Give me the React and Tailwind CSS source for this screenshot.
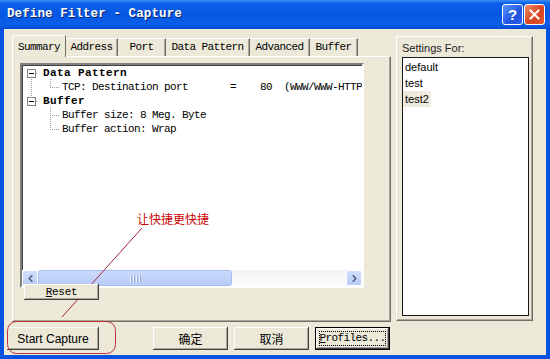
import { ChevronLeft, ChevronRight } from 'lucide-react'

const mono = "[font-family:'Liberation_Mono','DejaVu_Sans_Mono',monospace]"
const sans = "[font-family:'Liberation_Sans',Arial,sans-serif]"
const cjk = "[font-family:'Noto_Sans_CJK_SC',sans-serif]"
const raised = 'shadow-[inset_-1px_-1px_#404040,inset_1px_1px_#ffffff,inset_-2px_-2px_#aca899]'

const tabs = [
  { label: 'Summary', w: 'w-[54px]', active: true },
  { label: 'Address', w: 'w-[52px]' },
  { label: 'Port', w: 'w-[48px]' },
  { label: 'Data Pattern', w: 'w-[84px]' },
  { label: 'Advanced', w: 'w-[60px]' },
  { label: 'Buffer', w: 'w-[48px]' },
]

function Tab({ label, w, active }) {
  if (active) {
    return (
      <div className={`${w} h-[22px] -mb-px relative z-10 bg-[#ece9d8] border-l border-t border-white border-r border-r-[#716f64] rounded-tl-[2px] flex items-start justify-center pt-[3px] text-[11px] tracking-[-0.6px] text-black ${mono}`}>
        {label}
      </div>
    )
  }
  return (
    <div className={`${w} h-[18px] bg-[#ece9d8] border-t border-white border-r border-r-[#716f64] shadow-[inset_-1px_0_#aca899] flex items-center justify-center text-[11px] tracking-[-0.6px] text-black ${mono}`}>
      {label}
    </div>
  )
}

function MinusBox() {
  return (
    <div className="w-[9px] h-[9px] border border-[#848284] bg-white flex items-center justify-center">
      <div className="w-[5px] h-px bg-black" />
    </div>
  )
}

function TreeRow({ child, box, children }) {
  return (
    <div className={`h-[14px] flex items-center whitespace-pre text-[11px] text-black ${mono} ${child ? 'pl-[40px] tracking-[-0.6px]' : 'pl-[5px] font-bold tracking-[0.4px]'}`}>
      {box && <MinusBox />}
      {box && <div className="w-[7px]" />}
      <span>{children}</span>
    </div>
  )
}

function ScrollBtn({ children }) {
  return (
    <div className="w-[16px] h-[16px] rounded-[2px] border border-white bg-[linear-gradient(#d2dffc,#b8cbf6)] flex items-center justify-center text-[#4d6185]">
      {children}
    </div>
  )
}

function Button({ w, children, font, isDefault }) {
  if (isDefault) {
    return (
      <div className={`${w} h-[23px] border border-black bg-[#ece9d8] ${raised} p-[3px]`}>
        <div className={`w-full h-full border border-dotted border-black flex items-center justify-center text-[11px] text-black ${font}`}>
          {children}
        </div>
      </div>
    )
  }
  return (
    <div className={`${w} h-[23px] bg-[#ece9d8] ${raised} flex items-center justify-center text-black ${font}`}>
      {children}
    </div>
  )
}

export default function App() {
  return (
    <div className="relative w-[550px] h-[359px] overflow-hidden bg-[#0553e0] flex flex-col select-none">
      {/* Title bar */}
      <div className="h-[29px] shrink-0 flex items-center bg-[linear-gradient(#3d8cf7_0%,#0a5fe6_12%,#0557e3_50%,#0a5fe8_85%,#0548d4_100%)]">
        <span className={`ml-[7px] text-white font-bold text-[12.5px] tracking-[0.1px] [text-shadow:1px_1px_#0a246a] ${mono}`}>
          Define Filter - Capture
        </span>
        <div className="ml-auto mr-[5px] flex gap-px">
          <div className="w-[21px] h-[21px] rounded-[3px] border border-white bg-[linear-gradient(135deg,#5d95ff,#1f55e0_60%,#2a5fe8)] flex items-center justify-center text-white font-bold text-[15px] leading-none [font-family:'Liberation_Sans',Arial,sans-serif]">
            ?
          </div>
          <div className="w-[21px] h-[21px] rounded-[3px] border border-white bg-[linear-gradient(135deg,#f0906c,#d9431f_55%,#e05a30)] flex items-center justify-center">
            <svg width="11" height="11" viewBox="0 0 11 11">
              <path d="M1.5 1.5 L9.5 9.5 M9.5 1.5 L1.5 9.5" stroke="#fff" strokeWidth="2" strokeLinecap="square" />
            </svg>
          </div>
        </div>
      </div>

      {/* Client area */}
      <div className="flex-1 mx-[4px] mb-[4px] bg-[#ece9d8] flex flex-col">
        <div className="flex items-start pt-[6px]">
          {/* Tab control */}
          <div className="ml-[8px] w-[379px] flex flex-col">
            <div className="h-[21px] flex items-end">
              {tabs.map((t) => (
                <Tab key={t.label} {...t} />
              ))}
            </div>
            <div className="h-[266px] border-t border-l border-white border-r border-b border-r-[#716f64] border-b-[#716f64] shadow-[inset_-1px_-1px_#aca899] flex flex-col">
              <div className="ml-[7px] mt-[6px] w-[344px] h-[225px] bg-white border-2 border-t-[#808080] border-l-[#808080] border-r-white border-b-white shadow-[inset_1px_1px_#404040] flex flex-col">
                <div className="relative flex-1 overflow-hidden pt-px">
                  <svg className="absolute left-0 top-px" width="60" height="80">
                    <g stroke="#a0a0a0" strokeWidth="1" strokeDasharray="1 1" fill="none">
                      <path d="M9.5 13 V32" />
                      <path d="M28.5 13 V22 M28 21.5 H38" />
                      <path d="M28.5 41 V64 M28 49.5 H38 M28 63.5 H38" />
                      <path d="M14 7.5 H16 M14 35.5 H16" />
                    </g>
                  </svg>
                  <TreeRow box>Data Pattern</TreeRow>
                  <TreeRow child>TCP: Destination port       =    80  (WWW/WWW-HTTP</TreeRow>
                  <TreeRow box>Buffer</TreeRow>
                  <TreeRow child>Buffer size: 8 Meg. Byte</TreeRow>
                  <TreeRow child>Buffer action: Wrap</TreeRow>
                </div>
                {/* Horizontal scrollbar */}
                <div className="h-[16px] flex bg-[linear-gradient(#f3f4f6,#fdfdfd)]">
                  <ScrollBtn>
                    <ChevronLeft size={11} strokeWidth={3.5} />
                  </ScrollBtn>
                  <div className="w-[194px] h-[16px] rounded-[3px] border border-[#a6bdf2] bg-[linear-gradient(#cbdafc,#b8cbf7)] flex items-center justify-center gap-px">
                    <div className="w-px h-[7px] bg-[#eef3ff] shadow-[1px_0_#8fa8e0]" />
                    <div className="w-px h-[7px] bg-[#eef3ff] shadow-[1px_0_#8fa8e0] ml-px" />
                    <div className="w-px h-[7px] bg-[#eef3ff] shadow-[1px_0_#8fa8e0] ml-px" />
                    <div className="w-px h-[7px] bg-[#eef3ff] shadow-[1px_0_#8fa8e0] ml-px" />
                  </div>
                  <div className="flex-1" />
                  <ScrollBtn>
                    <ChevronRight size={11} strokeWidth={3.5} />
                  </ScrollBtn>
                </div>
              </div>
              <div className={`relative z-10 -mt-[4px] ml-[11px] w-[75px] h-[16px] bg-[#ece9d8] ${raised} flex items-center justify-center text-[11px] tracking-[-0.3px] text-black ${mono}`}>
                <span><span className="underline">R</span>eset</span>
              </div>
            </div>
          </div>

          {/* Settings For */}
          <div className="ml-[5px] mt-px w-[137px] h-[285px] border-t border-l border-white border-r border-b border-r-[#716f64] border-b-[#716f64] shadow-[inset_-1px_-1px_#aca899] flex flex-col">
            <div className={`pl-[5px] pt-[3px] h-[20px] text-[11px] text-[#222] ${sans}`}>Settings For:</div>
            <div className={`ml-[5px] w-[127px] h-[259px] bg-white border border-[#1a1a1a] pt-[1px] text-[11px] text-black ${sans}`}>
              <div className="h-[16px] pl-[2px] flex items-center">default</div>
              <div className="h-[16px] pl-[2px] flex items-center">test</div>
              <div className="h-[16px] pl-[2px] flex items-center w-[28px] bg-[#efebde]">test2</div>
            </div>
          </div>
        </div>

        {/* Bottom buttons */}
        <div className="mt-[5px] flex">
          <div className="ml-[3px]">
            <Button w="w-[92px]" font={`text-[12px] ${sans}`}>Start Capture</Button>
          </div>
          <div className="ml-[54px]">
            <Button w="w-[75px]" font={`text-[12px] ${cjk}`}>确定</Button>
          </div>
          <div className="ml-[6px]">
            <Button w="w-[75px]" font={`text-[12px] ${cjk}`}>取消</Button>
          </div>
          <div className="ml-[6px]">
            <Button w="w-[75px]" font={`tracking-[-0.6px] ${mono}`} isDefault>
              <span><span className="underline">P</span>rofiles...</span>
            </Button>
          </div>
        </div>
      </div>

      {/* Red annotation overlay */}
      <div className={`absolute left-[137px] top-[211px] text-[12px] text-[#cc0000] leading-[16px] ${cjk}`}>
        让快捷更快捷
      </div>
      <svg className="absolute left-0 top-0 pointer-events-none" width="550" height="359">
        <line x1="142" y1="228" x2="62" y2="317" stroke="#a8203e" strokeWidth="1" />
        <rect x="7.5" y="321.5" width="108" height="32" rx="9" fill="none" stroke="#c0303a" strokeWidth="1" />
      </svg>
    </div>
  )
}
